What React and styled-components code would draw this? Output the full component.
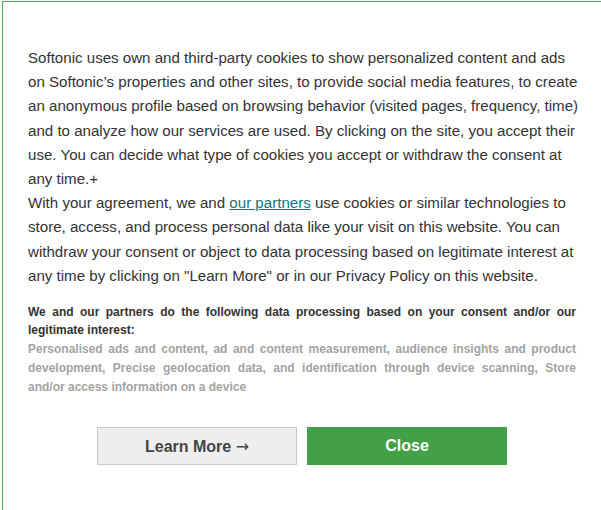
import React from 'react';
import styled, { createGlobalStyle } from 'styled-components';

const GlobalStyle = createGlobalStyle`
  html, body {
    margin: 0;
    padding: 0;
    background: #fff;
    overflow: hidden;
  }
`;

const App = () => {
  return (
    <>
      <GlobalStyle />
      <Page>
        <Dialog>
          <Intro>
            Softonic uses own and third-party cookies to show personalized content and ads on
            Softonic’s properties and other sites, to provide social media features, to create an
            anonymous profile based on browsing behavior (visited pages, frequency, time) and to
            analyze how our services are used. By clicking on the site, you accept their use. You
            can decide what type of cookies you accept or withdraw the consent at any time.+
            <br />
            With your agreement, we and <PartnerLink href="#">our partners</PartnerLink> use cookies
            or similar technologies to store, access, and process personal data like your visit on
            this website. You can withdraw your consent or object to data processing based on
            legitimate interest at any time by clicking on "Learn More" or in our Privacy Policy on
            this website.
          </Intro>
          <Purposes>
            <PurposeTitle>
              We and our partners do the following data processing based on your consent and/or our
              legitimate interest:
            </PurposeTitle>
            <PurposeList>
              Personalised ads and content, ad and content measurement, audience insights and
              product development, Precise geolocation data, and identification through device
              scanning, Store and/or access information on a device
            </PurposeList>
          </Purposes>
          <Actions>
            <Button>
              Learn More <Arrow>→</Arrow>
            </Button>
            <Button $primary>Close</Button>
          </Actions>
        </Dialog>
      </Page>
    </>
  );
};

export default App;

const Page = styled.div`
  padding: 1px 0 0 2px;
  height: 510px;
  box-sizing: border-box;
`;

const Dialog = styled.div`
  width: 600px;
  min-height: 560px;
  box-sizing: border-box;
  border: 1px solid #4caf50;
  background: #fff;
  padding: 44px 22px 0 25px;
  font-family: 'Liberation Sans', Arial, sans-serif;
`;

const Intro = styled.p`
  margin: 0;
  font-size: 15.1px;
  line-height: 24.2px;
  color: #333;
`;

const PartnerLink = styled.a`
  color: #16737f;
  text-decoration: underline;
`;

const Purposes = styled.div`
  margin-top: 15px;
  margin-right: 3px;
  font-size: 12px;
  font-weight: bold;
  text-align: justify;
`;

const PurposeTitle = styled.div`
  color: #333;
  line-height: 18px;
`;

const PurposeList = styled.div`
  color: #a3a3a3;
  line-height: 19px;
  margin-top: 1px;
`;

const Actions = styled.div`
  display: flex;
  justify-content: center;
  gap: 10px;
  margin-top: 30px;
  margin-right: 3px;
`;

const Button = styled.button`
  width: 200px;
  height: 38px;
  box-sizing: border-box;
  font-family: 'Liberation Sans', Arial, sans-serif;
  font-size: 16px;
  font-weight: bold;
  cursor: pointer;
  border: 1px solid ${({ $primary }) => ($primary ? '#43a047' : '#c8c8c8')};
  background: ${({ $primary }) => ($primary ? '#43a047' : '#eee')};
  color: ${({ $primary }) => ($primary ? '#fff' : '#444')};
`;

const Arrow = styled.span`
  font-family: 'DejaVu Sans', sans-serif;
  font-weight: normal;
`;
